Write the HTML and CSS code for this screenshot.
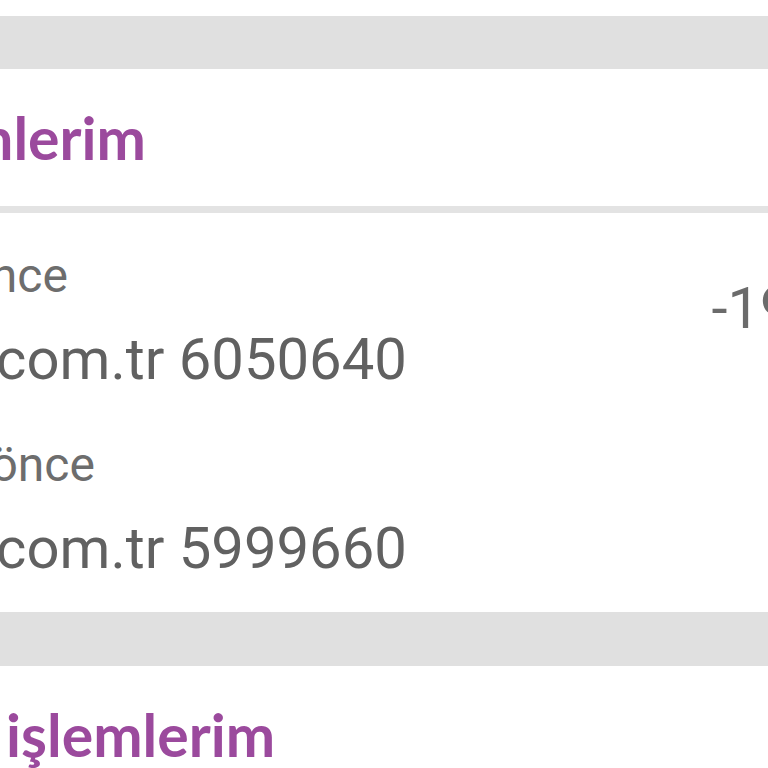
FILE: index.html
```html
<!DOCTYPE html>
<html lang="tr">
<head>
    <meta charset="UTF-8">
    <meta name="viewport" content="width=device-width, initial-scale=1.0">
    <title>Tüm işlemlerim</title>
    <link rel="stylesheet" href="styles.css">
</head>
<body>
    <div class="screen">
        <div class="spacer"></div>
        <div class="gap"></div>

        <div class="section">
            <div class="section-title">Tüm işlemlerim</div>
        </div>

        <div class="list">
            <div class="row">
                <div class="row-info">
                    <div class="row-date">5 dakika önce</div>
                    <div class="row-name">trendyol.com.tr 6050640</div>
                </div>
                <div class="row-amount">-199,90 TL</div>
            </div>
            <div class="row">
                <div class="row-info">
                    <div class="row-date">15 dakika önce</div>
                    <div class="row-name">trendyol.com.tr 5999660</div>
                </div>
                <div class="row-amount">-9,90 TL</div>
            </div>
        </div>

        <div class="gap gap-bottom"></div>

        <div class="section">
            <div class="section-title">Bekleyen işlemlerim</div>
        </div>
    </div>
</body>
</html>
```

FILE: styles.css
```css
html, body {
    margin: 0;
    padding: 0;
    overflow: hidden;
    background-color: #ffffff;
}
.screen {
    width: 1304px;
    margin-left: -275px;
    background-color: #ffffff;
}
.spacer {
    height: 16px;
}
.gap {
    height: 53px;
    background-color: #e0e0e0;
}
.gap-bottom {
    height: 54px;
}
.section {
    height: 137px;
    box-sizing: border-box;
    padding: 39px 0 0 25px;
}
.section-title {
    font-family: "Lato", "Open Sans", sans-serif;
    font-weight: 700;
    font-size: 59px;
    line-height: 59px;
    color: #9b4a9d;
}
.list {
    border-top: 7px solid #e3e3e3;
    padding: 13px 48px 8px 48px;
}
.row {
    display: flex;
    justify-content: space-between;
    align-items: flex-start;
    padding: 22px 0;
}
.row-info {
    display: flex;
    flex-direction: column;
    gap: 21px;
}
.row-date {
    font-family: "Roboto", "Liberation Sans", sans-serif;
    font-size: 48px;
    line-height: 56px;
    color: #6d6d6d;
}
.row-name {
    font-family: "Roboto", "Liberation Sans", sans-serif;
    font-size: 58px;
    line-height: 68px;
    color: #616161;
}
.row-amount {
    font-family: "Roboto", "Liberation Sans", sans-serif;
    font-size: 58px;
    line-height: 68px;
    color: #6b6b6b;
    padding-top: 26px;
}
```
